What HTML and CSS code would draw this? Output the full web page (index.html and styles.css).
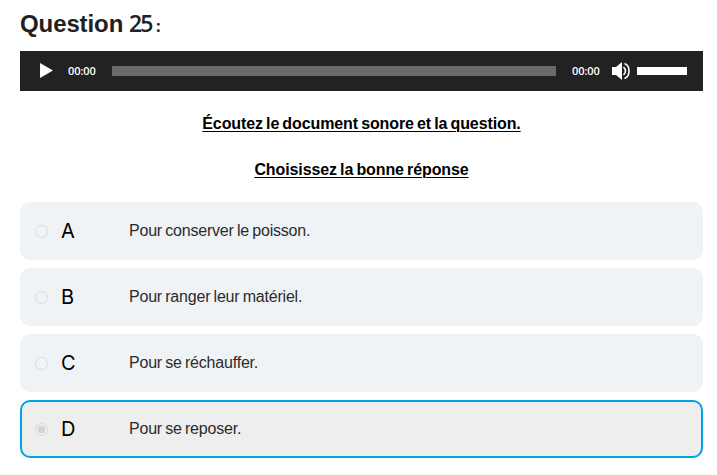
FILE: index.html
```html
<!DOCTYPE html>
<html lang="fr">
<head>
<meta charset="utf-8">
<title>Question 25</title>
<link rel="stylesheet" href="styles.css">
</head>
<body>
<main class="quiz">
  <h1 class="title"><span class="word">Question</span><span class="number">25</span><span class="colon">:</span></h1>
  <div class="player">
    <svg class="play" width="13" height="16" viewBox="0 0 13 16"><path d="M0 0L13 7.5L0 15Z" fill="#fff"/></svg>
    <span class="time">00:00</span>
    <span class="track"></span>
    <span class="time">00:00</span>
    <svg class="speaker" width="18" height="18" viewBox="0 0 18 18"><path d="M0 5H4L10 0V18L4 13H0Z" fill="#fff"/><path d="M11.5 5Q15.5 9 11.5 13M12.5 1.5Q17 3 17 9T12.5 16.5" fill="none" stroke="#fff" stroke-width="1.6"/></svg>
    <span class="volume"></span>
  </div>
  <p class="instruction first"><u>Écoutez le document sonore et la question.</u></p>
  <p class="instruction"><u>Choisissez la bonne réponse</u></p>
  <div class="answers">
    <label class="answer"><span class="radio"></span><span class="letter">A</span><span class="text">Pour conserver le poisson.</span></label>
    <label class="answer"><span class="radio"></span><span class="letter">B</span><span class="text">Pour ranger leur matériel.</span></label>
    <label class="answer"><span class="radio"></span><span class="letter">C</span><span class="text">Pour se réchauffer.</span></label>
    <label class="answer selected"><span class="radio"></span><span class="letter">D</span><span class="text">Pour se reposer.</span></label>
  </div>
</main>
</body>
</html>
```
FILE: styles.css
```css
* { box-sizing: border-box; }
body { margin: 0; background: #fff; color: #212121; font-family: "Liberation Sans", Arial, sans-serif; }
.quiz { padding: 7px 14px 0 20px; }
.title { display: flex; align-items: baseline; margin: 0; height: 44px; font-size: 24px; line-height: 32px; font-weight: 700; }
.word { width: 109px; letter-spacing: -.1px; }
.number { width: 26px; font-family: "Open Sans", sans-serif; font-weight: 600; font-size: 23px; letter-spacing: -2px; }
.colon { margin-left: 1px; font-family: "Open Sans", sans-serif; font-weight: 700; font-size: 16px; }
.player { display: flex; align-items: center; height: 40px; background: #222; padding: 0 16px 0 20px; color: #fff; }
.play { margin-right: 15px; }
.time { width: 28px; font-family: "Open Sans", sans-serif; font-size: 11px; line-height: 14px; font-weight: 600; letter-spacing: -.1px; white-space: nowrap; }
.track { width: 444px; height: 10px; margin: 0 16px; background: #6a6a6a; }
.speaker { margin: 0 7px 0 12px; }
.volume { width: 50px; height: 8px; background: #fff; }
.instruction { margin: 0; height: 46px; color: #000; font-size: 16px; line-height: 24px; font-weight: 700; letter-spacing: -.1px; word-spacing: -1.2px; text-align: center; }
.instruction u { text-decoration-thickness: 1px; text-underline-offset: 2px; }
.first { margin-top: 21px; }
.answers { display: grid; gap: 8px; margin-top: -2px; }
.answer { display: flex; align-items: center; height: 58px; padding-left: 15px; border-radius: 10px; background: #eff3f6; }
.radio { width: 13px; height: 13px; margin-top: 1px; border: 1px solid #d9dadb; border-radius: 50%; background: #f1f3f5; }
.letter { width: 68px; margin-left: 13px; color: #000; font-family: Inter, sans-serif; font-size: 20px; }
.text { color: #2b2b2b; font-size: 16px; line-height: 20px; letter-spacing: -.2px; word-spacing: -1px; }
.selected { border: 2px solid #00a2e8; background: #eee; padding-left: 13px; }
.selected .radio { background: radial-gradient(circle, #d3d3d3 0 3.5px, transparent 4px); }
```
